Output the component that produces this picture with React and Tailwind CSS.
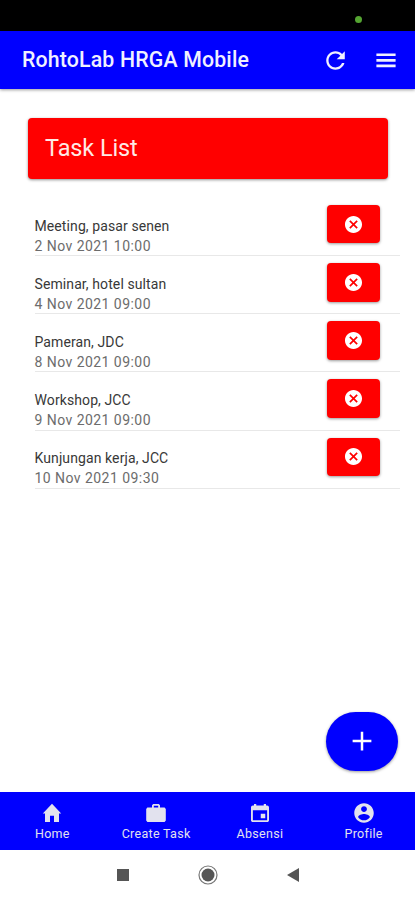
import { IoMdRefresh, IoMdCloseCircle, IoMdAdd, IoMdCalendar, IoMdContact } from "react-icons/io";

const tasks = [
  { title: "Meeting, pasar senen", date: "2 Nov 2021 10:00" },
  { title: "Seminar, hotel sultan", date: "4 Nov 2021 09:00" },
  { title: "Pameran, JDC", date: "8 Nov 2021 09:00" },
  { title: "Workshop, JCC", date: "9 Nov 2021 09:00" },
  { title: "Kunjungan kerja, JCC", date: "10 Nov 2021 09:30" },
];

function HomeIcon({ size }) {
  return (
    <svg width={size} height={size} viewBox="0 0 24 24" fill="currentColor">
      <path d="M12 2.7 2.8 12.6H5V21h5v-6.2h4V21h5v-8.4h2.2z" />
    </svg>
  );
}

function BriefcaseIcon({ size }) {
  return (
    <svg width={size} height={size} viewBox="0 0 24 24" fill="currentColor" fillRule="evenodd">
      <path d="M9.2 3h5.6L16 4.3v2.2h4.6L21.8 8v11.6L20.6 21H3.4l-1.2-1.4V8l1.2-1.5H8V4.3zM9.8 4.7v1.8h4.4V4.7z" />
    </svg>
  );
}

function MenuIcon() {
  return (
    <svg width="20" height="15" viewBox="0 0 20 15" fill="currentColor">
      <path d="M.4.4h19.2v2.7H.4zM.4 6h19.2v2.7H.4zM.4 11.6h19.2v2.7H.4z" />
    </svg>
  );
}

const tabs = [
  { label: "Home", Icon: HomeIcon },
  { label: "Create Task", Icon: BriefcaseIcon },
  { label: "Absensi", Icon: IoMdCalendar },
  { label: "Profile", Icon: IoMdContact },
];

function TaskRow({ title, date }) {
  return (
    <li className="flex h-[58.2px] justify-between border-b-[1.5px] border-[#e8e8e8] pr-5">
      <div className="pt-[17.7px]">
        <p className="text-[14px] leading-5 tracking-[0.1px] text-[#383838]">{title}</p>
        <p className="text-[14px] leading-5 tracking-[0.45px] text-[#6c6c6c]">{date}</p>
      </div>
      <button className="mt-[7px] flex h-[38.5px] w-[53.5px] items-center justify-center rounded-[4px] bg-[#ff0000] text-white shadow-[0_1px_3px_rgba(0,0,0,0.4)]">
        <IoMdCloseCircle size={21} />
      </button>
    </li>
  );
}

export default function App() {
  return (
    <div className="relative flex h-[900px] w-full flex-col overflow-hidden bg-white font-['Roboto',sans-serif]">
      <div className="flex h-[30.5px] shrink-0 justify-end bg-black pt-4 pr-[53px]">
        <span className="size-[7px] rounded-full bg-[#55a532]" />
      </div>
      <header className="flex h-[58.5px] shrink-0 items-center bg-[#0000ff] pt-px pr-[19px] pl-[22px] text-[#f0f0ff] shadow-[0_1px_3px_rgba(0,0,0,0.4)]">
        <h1 className="flex-1 text-[21.3px] font-medium tracking-[0.16px] whitespace-nowrap">RohtoLab HRGA Mobile</h1>
        <IoMdRefresh size={27} className="mr-[27px]" />
        <MenuIcon />
      </header>
      <main className="flex-1 pt-[28.5px]">
        <h2 className="mr-[27px] ml-7 flex h-[61px] items-center rounded-[4px] bg-[#ff0000] pt-0.5 pl-[17px] text-[23.5px] tracking-[-0.1px] text-[#ffe9e5] shadow-[0_1px_3px_rgba(0,0,0,0.45)]">
          Task List
        </h2>
        <ul className="mt-[19.4px] mr-[15px] ml-[34.5px]">
          {tasks.map((task) => (
            <TaskRow key={task.title} {...task} />
          ))}
        </ul>
      </main>
      <button className="absolute top-[711.5px] right-[17px] flex h-[59.5px] w-[72px] items-center justify-center rounded-full bg-[#0000ff] text-white shadow-[0_1px_3px_rgba(0,0,0,0.4)]">
        <IoMdAdd size={30} />
      </button>
      <nav className="grid h-[58.5px] shrink-0 grid-cols-4 bg-[#0000ff] text-[#e2e2ee]">
        {tabs.map(({ label, Icon }) => (
          <a key={label} className="flex flex-col items-center pt-[9px] pl-px">
            <Icon size={24} />
            <span className="text-[12.5px] leading-[18px] tracking-[0.3px]">{label}</span>
          </a>
        ))}
      </nav>
      <footer className="flex h-[50px] shrink-0 items-center justify-center gap-[69px] text-[#555]">
        <span className="size-3 bg-[#555]" />
        <svg width="20" height="20" viewBox="0 0 20 20">
          <circle cx="10" cy="10" r="9" fill="none" stroke="#777" strokeWidth="1.2" />
          <circle cx="10" cy="10" r="6.5" fill="#555" />
        </svg>
        <svg width="12" height="14" viewBox="0 0 12 14">
          <path d="M12 0v14L0 7z" fill="#555" />
        </svg>
      </footer>
    </div>
  );
}
